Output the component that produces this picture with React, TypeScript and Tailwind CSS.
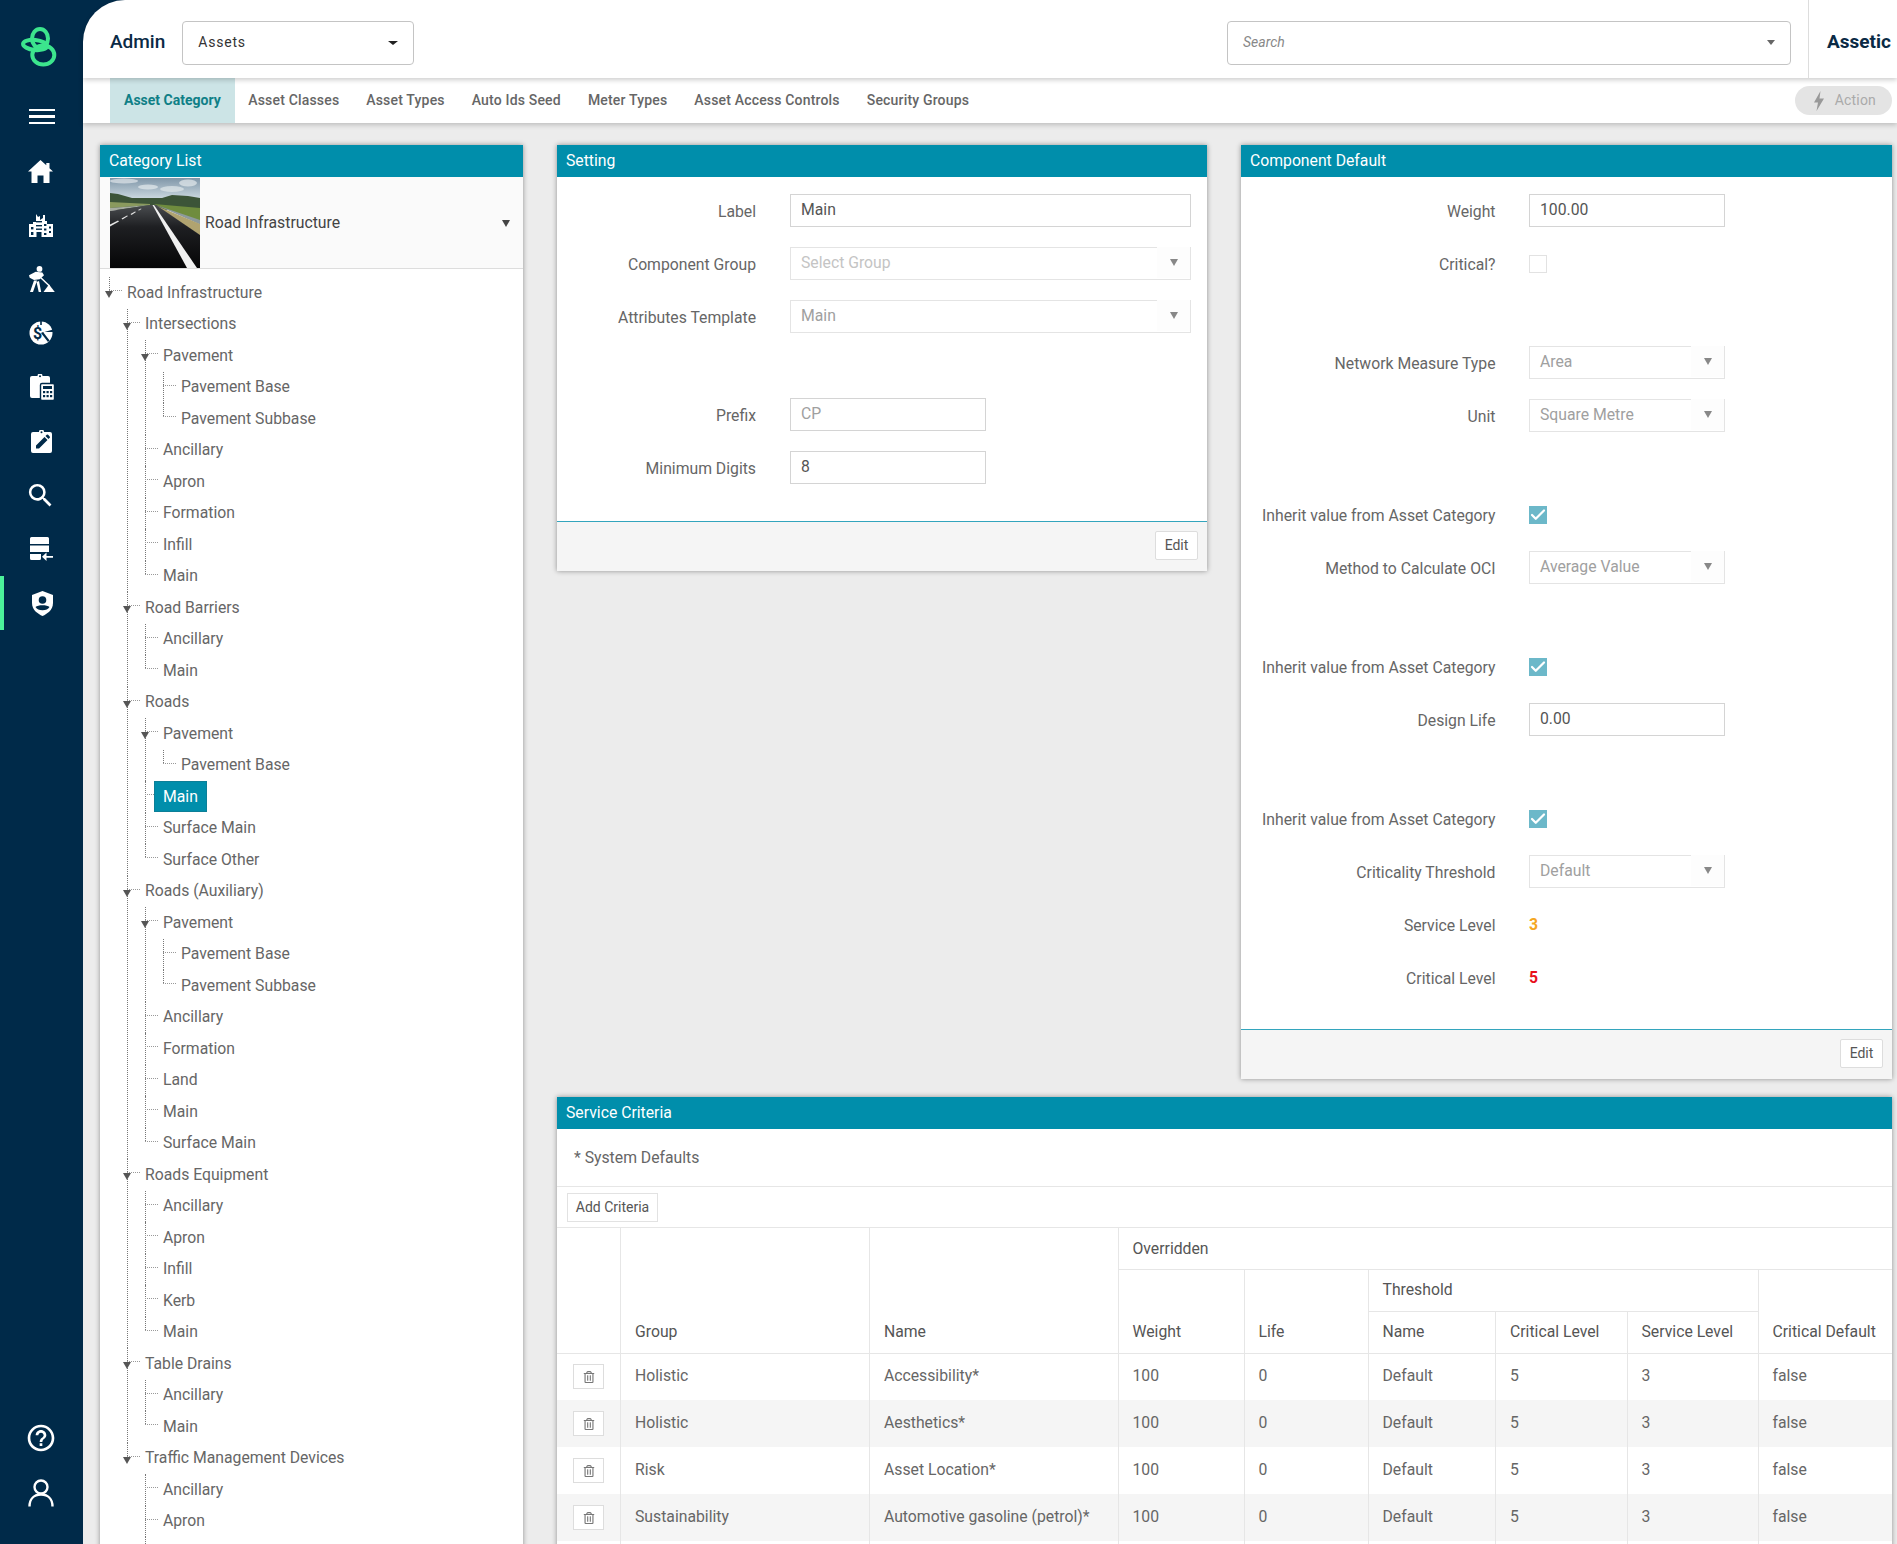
import { FaRegTrashAlt } from "react-icons/fa";
import { MdHelpOutline, MdSearch } from "react-icons/md";
import { Check } from "lucide-react";

interface TreeNode {
  label: string;
  selected?: boolean;
  children?: TreeNode[];
}

const leaf = (...names: string[]): TreeNode[] => names.map((label) => ({ label }));

const pavement = (...names: string[]): TreeNode => ({ label: "Pavement", children: leaf(...names) });

// last entry of the tree is blank: the real list runs on past the fold, only its connector shows
const tree: TreeNode[] = [
  {
    label: "Road Infrastructure",
    children: [
      {
        label: "Intersections",
        children: [pavement("Pavement Base", "Pavement Subbase"), ...leaf("Ancillary", "Apron", "Formation", "Infill", "Main")],
      },
      { label: "Road Barriers", children: leaf("Ancillary", "Main") },
      {
        label: "Roads",
        children: [pavement("Pavement Base"), { label: "Main", selected: true }, ...leaf("Surface Main", "Surface Other")],
      },
      {
        label: "Roads (Auxiliary)",
        children: [pavement("Pavement Base", "Pavement Subbase"), ...leaf("Ancillary", "Formation", "Land", "Main", "Surface Main")],
      },
      { label: "Roads Equipment", children: leaf("Ancillary", "Apron", "Infill", "Kerb", "Main") },
      { label: "Table Drains", children: leaf("Ancillary", "Main") },
      { label: "Traffic Management Devices", children: leaf("Ancillary", "Apron", "") },
    ],
  },
];

const tabs = ["Asset Classes", "Asset Types", "Auto Ids Seed", "Meter Types", "Asset Access Controls", "Security Groups"];

const criteria = [
  { group: "Holistic", name: "Accessibility*" },
  { group: "Holistic", name: "Aesthetics*" },
  { group: "Risk", name: "Asset Location*" },
  { group: "Sustainability", name: "Automotive gasoline (petrol)*" },
];

function Logo() {
  return (
    <svg width="60" height="60" viewBox="15 20 60 60" fill="none" stroke="#3ce58d" strokeWidth="4">
      <ellipse cx="43" cy="38.5" rx="8" ry="9.500" />
      <ellipse cx="38" cy="45" rx="12" ry="5" transform="rotate(6 38 45)" />
      <ellipse cx="46.300" cy="55" rx="11" ry="9.500" />
    </svg>
  );
}

function HomeIcon() {
  return (
    <svg width="25" height="23" viewBox="0 0 25 23" fill="#fff">
      <path d="M12.500 0 0 11.500h3.500V23h6v-7.500h6V23h6V11.500H25l-3.500-3.300V3h-3.200v2.200z" />
    </svg>
  );
}

function BuildingIcon() {
  return (
    <svg width="24" height="24" viewBox="0 0 24 24">
      <path fill="#fff" d="M0 11h4V9l3 0V1l2 3 2-1v4l3-2V2h2v6h2v3h6v13H0z" />
      <g fill="#002a49">
        <rect x="7" y="8" width="6" height="1.400" />
        <rect x="15" y="11" width="2.400" height="2" />
        <rect x="7" y="12" width="6" height="1.400" />
        <rect x="2" y="14" width="2.400" height="2.400" />
        <rect x="7" y="15.500" width="6" height="1.400" />
        <rect x="15" y="15.500" width="2.400" height="2" />
        <rect x="20" y="13.500" width="2" height="2" />
        <rect x="2" y="19" width="2.400" height="3" />
        <rect x="7.500" y="19" width="5" height="5" />
        <rect x="15" y="20" width="2.400" height="2" />
        <rect x="20" y="18" width="2" height="2" />
      </g>
    </svg>
  );
}

function WorkerIcon() {
  return (
    <svg width="26" height="27" viewBox="0 0 26 27" fill="#fff">
      <circle cx="10.500" cy="2.900" r="2.900" />
      <path d="M0 9.300 6.700 5.700 13.300 6.500 15 9.300 10.700 13.300 5 14 .7 11.700z" />
      <path d="M5 14.500h3L4 26H1zM7.500 16l2.500-1 2.200 11H9.700z" />
      <path d="M9.500 10.500 10.500 9.500 21 19.500 20 20.500z" />
      <path d="M14.500 26 20 18.500 25.800 26z" />
    </svg>
  );
}

function PieDollarIcon() {
  return (
    <svg width="24" height="24" viewBox="0 0 24 24">
      <circle cx="12" cy="12" r="11.500" fill="#fff" />
      <path d="M12 12 24 8.500v2.500H14zM11.200 0h1.600v4h-1.600zM12 12l7 9 1.600-1.600L14 11z" fill="#002a49" />
      <text x="8.500" y="17.500" fontSize="16" fontWeight="700" fontFamily="Roboto, sans-serif" textAnchor="middle" fill="#002a49">
        $
      </text>
    </svg>
  );
}

function ClipboardCalcIcon() {
  return (
    <svg width="25" height="27" viewBox="0 0 25 27">
      <path fill="#fff" d="M2 2h5.500a2.500 2.500 0 0 1 5 0H18a2 2 0 0 1 2 2v18a2 2 0 0 1-2 2H2a2 2 0 0 1-2-2V4a2 2 0 0 1 2-2z" />
      <circle cx="10" cy="2.200" r="1" fill="#002a49" />
      <rect x="10.500" y="9.500" width="14" height="17" rx="1.500" fill="#fff" stroke="#002a49" strokeWidth="1.400" />
      <rect x="13" y="12" width="9" height="3" fill="#002a49" />
      <g fill="#002a49">
        <rect x="13" y="17" width="2.200" height="2.200" />
        <rect x="16.500" y="17" width="2.200" height="2.200" />
        <rect x="20" y="17" width="2.200" height="2.200" />
        <rect x="13" y="21" width="2.200" height="2.200" />
        <rect x="16.500" y="21" width="2.200" height="2.200" />
        <rect x="20" y="21" width="2.200" height="2.200" />
      </g>
    </svg>
  );
}

function ClipboardEditIcon() {
  return (
    <svg width="21" height="23" viewBox="0 0 21 23">
      <path fill="#fff" d="M2 2h6a2.500 2.500 0 0 1 5 0h6a2 2 0 0 1 2 2v17a2 2 0 0 1-2 2H2a2 2 0 0 1-2-2V4a2 2 0 0 1 2-2z" />
      <circle cx="10.500" cy="2.200" r="1" fill="#002a49" />
      <path fill="#002a49" d="M5 18.500v-3L13.500 7l3 3L8 18.500zM14.500 6l1.200-1.200a1 1 0 0 1 1.400 0l1.600 1.600a1 1 0 0 1 0 1.400L17.500 9z" />
    </svg>
  );
}

function ListArrowIcon() {
  return (
    <svg width="23" height="24" viewBox="0 0 23 24" fill="#fff">
      <path d="M1.500 0h16A1.500 1.500 0 0 1 19 1.500V7H0V1.500A1.500 1.500 0 0 1 1.500 0zM0 8.500h19V15H0zM0 17h11v4.500a1.500 1.500 0 0 1-1.500 1.500h-8A1.500 1.500 0 0 1 0 21.500z" />
      <path d="M23 19v1.700H16.500V24l-4.500-4.200 4.500-4.200V19z" />
    </svg>
  );
}

function ShieldIcon() {
  return (
    <svg width="21" height="25" viewBox="0 0 21 25">
      <path fill="#fff" d="M10.500 0 21 4v8c0 7-6 11-10.500 13C6 23 0 19 0 12V4z" />
      <circle cx="10.500" cy="9" r="3.800" fill="#002a49" />
      <path fill="#002a49" d="M3.500 16c2.500-2.500 11.500-2.500 14 0-1.500 2.500-3.500 3.200-7 3.200S5 18.500 3.500 16z" />
    </svg>
  );
}

function UserIcon() {
  return (
    <svg width="26" height="28" viewBox="0 0 26 28" fill="none" stroke="#fff" strokeWidth="2.400">
      <circle cx="13" cy="8" r="6.500" />
      <path d="M1.500 27.500C1.500 19.500 6.500 15.500 13 15.500s11.500 4 11.500 12" />
    </svg>
  );
}

function RoadPicture() {
  return (
    <svg width="90" height="90" viewBox="0 0 90 90" className="shrink-0">
      <defs>
        <linearGradient id="roadSky" x1="0" y1="0" x2="0" y2="1">
          <stop offset="0" stopColor="#7f96a8" />
          <stop offset="1" stopColor="#c9d6de" />
        </linearGradient>
        <linearGradient id="roadTar" x1="0" y1="0" x2="0" y2="1">
          <stop offset="0" stopColor="#4a4d50" />
          <stop offset="0.35" stopColor="#1e1f22" />
          <stop offset="1" stopColor="#050506" />
        </linearGradient>
      </defs>
      <rect width="90" height="20" fill="url(#roadSky)" />
      <ellipse cx="14" cy="3" rx="14" ry="2.500" fill="#dfe6ea" opacity="0.7" />
      <ellipse cx="38" cy="9" rx="10" ry="2.500" fill="#e4eaed" opacity="0.7" />
      <ellipse cx="62" cy="11" rx="12" ry="3" fill="#dfe7ea" opacity="0.7" />
      <ellipse cx="78" cy="5" rx="9" ry="3.500" fill="#e4eaed" opacity="0.7" />
      <path d="M0 15 8 16 22 20 52 20 62 17 78 18 90 20V32H0z" fill="#3c5438" />
      <path d="M0 24 40 26V27L0 30z" fill="#8a9a5e" />
      <path d="M0 30 40 27 0 33z" fill="#a6aca0" />
      <path d="M44 26 90 30V44L46 27z" fill="#6f8c3e" />
      <path d="M46 27 90 42V46.500z" fill="#8d9a9c" />
      <path d="M47 28 90 46V57.500L46 28z" fill="#b0a370" />
      <path d="M40 27H46L90 57V90H0V33z" fill="url(#roadTar)" />
      <path d="M42.500 27H44L87 90H77z" fill="#f0f0f0" />
      <path d="M0 46.500 8 42.500 9 43.500 0 48.500zM11.500 40.500 17 37.500 18 38 12.500 41.500zM20.500 36 25 33.500 26 34 21.500 37zM28 32 31 30.500 31.500 31 29 32.500z" fill="#e4e4e4" />
    </svg>
  );
}

function TreeItem({ node, last }: { node: TreeNode; last: boolean }) {
  return (
    <li className="relative">
      {/* connector lines */}
      <span className={`absolute left-0 top-0 border-l border-dotted border-[#777] ${last ? "h-[13px]" : "bottom-0"}`} />
      <span className="absolute left-0 top-[13px] w-[13px] border-t border-dotted border-[#999]" />
      {node.children && (
        <span className="absolute left-[-4.5px] top-[14px] h-0 w-0 border-x-[4.5px] border-t-[7px] border-x-transparent border-t-[#555]" />
      )}
      <div className="flex h-[31.5px] items-center pl-[18px]">
        {node.selected ? (
          <span className="relative ml-[-9.5px] flex h-[31px] items-center border border-[#0c7f97] bg-[#008eab] px-[8.5px] text-white">{node.label}</span>
        ) : (
          node.label
        )}
      </div>
      {node.children && (
        <ul className="ml-[18px]">
          {node.children.map((child, i) => (
            <TreeItem key={child.label} node={child} last={i === node.children!.length - 1} />
          ))}
        </ul>
      )}
    </li>
  );
}

// pass full border classes, each caret in the picture has its own proportions
function Caret({ shape }: { shape: string }) {
  return <span className={`h-0 w-0 border-x-transparent ${shape}`} />;
}

function PanelTitle({ title }: { title: string }) {
  return <div className="flex h-[32px] items-center bg-[#008eab] pl-[9px] text-white">{title}</div>;
}

function PanelFooter() {
  return (
    <div className="flex h-[50px] items-start justify-end border-t border-[#33a5bd] bg-[#f5f5f5] pt-[9px] pr-[9px]">
      <button className="h-[29px] w-[43px] rounded-[2px] border border-[#ddd] bg-white text-[14px] text-[#555]">Edit</button>
    </div>
  );
}

function Row({ label, labelClass, children }: { label: string; labelClass: string; children: React.ReactNode }) {
  return (
    <div className="mb-[20px] flex h-[33px] items-center">
      <span className={`shrink-0 pt-[2px] text-right ${labelClass}`}>{label}</span>
      {children}
    </div>
  );
}

function TextBox({ value, width, disabled }: { value: string; width: string; disabled?: boolean }) {
  return (
    <div className={`flex h-[33px] items-center border border-[#d4d4d4] bg-white pl-[10px] pb-[2px] ${width} ${disabled ? "text-[#a0a0a0]" : "text-[#555]"}`}>
      {value}
    </div>
  );
}

function SelectBox({ value, width, faint }: { value: string; width: string; faint?: boolean }) {
  return (
    <div className={`flex h-[33px] items-center justify-between border border-[#e4e4e4] bg-white pb-[2px] pl-[10px] ${width} ${faint ? "text-[#c4c4c4]" : "text-[#a0a0a0]"}`}>
      {value}
      <span className="flex h-[31px] w-[33px] items-center justify-center bg-[#fdfdfd]">
        <Caret shape="border-x-[4.5px] border-t-[7px] border-t-[#888]" />
      </span>
    </div>
  );
}

function InheritCheck({ label }: { label: string }) {
  return (
    <Row label={label} labelClass={compLabel}>
      <span className="flex h-[18px] w-[18px] items-center justify-center bg-[#6cb8c9]">
        <Check size={18} strokeWidth={3} color="#fff" />
      </span>
    </Row>
  );
}

const setLabel = "w-[199px] mr-[34px]";
const compLabel = "w-[254.5px] mr-[33.5px]";
const th = "border-b border-l border-[#e6e6e6] px-[14px] text-left align-bottom pb-[9px] font-normal text-[#555]";
const td = "border-l border-[#e6e6e6] px-[14px] pb-[2px] text-[#666]";

export default function App() {
  return (
    <div className="flex h-[1544px] w-[1897px] overflow-hidden bg-[#002a49] font-['Roboto',sans-serif] text-[15.75px] text-[#666]">
      <aside className="relative flex w-[83px] shrink-0 flex-col items-center pt-[20px] text-white">
        <Logo />
        <div className="mt-[9px] flex h-[55px] w-full flex-col items-center justify-center gap-[4px]">
          <span className="h-[2.5px] w-[26px] bg-white" />
          <span className="h-[2.5px] w-[26px] bg-white" />
          <span className="h-[2.5px] w-[26px] bg-white" />
        </div>
        <div className="flex h-[54px] w-full items-center justify-center pr-[2px]"><HomeIcon /></div>
        <div className="flex h-[54px] w-full items-center justify-center pr-[2px]"><BuildingIcon /></div>
        <div className="flex h-[54px] w-full items-center justify-center"><WorkerIcon /></div>
        <div className="flex h-[54px] w-full items-center justify-center pr-[2px]"><PieDollarIcon /></div>
        <div className="flex h-[54px] w-full items-center justify-center pl-[2px]"><ClipboardCalcIcon /></div>
        <div className="flex h-[54px] w-full items-center justify-center"><ClipboardEditIcon /></div>
        <div className="flex h-[54px] w-full items-center justify-center pr-[2px]"><MdSearch size={31} color="#fff" /></div>
        <div className="flex h-[54px] w-full items-center justify-center"><ListArrowIcon /></div>
        <div className="relative flex h-[54px] w-full items-center justify-center pl-[1px]">
          <span className="absolute left-0 top-0 h-[54px] w-[4px] bg-[#4cf29b]" />
          <ShieldIcon />
        </div>
        <div className="mt-auto mb-[37px] flex flex-col items-center gap-[25px] pr-[2px]">
          <MdHelpOutline size={32} color="#fff" />
          <UserIcon />
        </div>
      </aside>

      <div className="flex min-w-0 flex-1 flex-col">
        <header className="relative z-20 flex h-[78px] shrink-0 items-center rounded-tl-[42px] bg-white pt-[7px] pl-[27px] shadow-[0_2px_5px_rgba(0,0,0,0.2)]">
          <span className="mr-[17px] text-[19px] font-medium text-[#0a2a45]">Admin</span>
          <div className="flex h-[44px] w-[232px] items-center justify-between rounded-[4px] border border-[#c4c4c4] px-[15px] text-[14px] tracking-[0.8px] text-[#333]">
            Assets
            <Caret shape="border-x-[5px] border-t-[4px] border-t-[#222]" />
          </div>
          <div className="ml-auto flex h-[44px] w-[564px] items-center justify-between rounded-[4px] border border-[#c4c4c4] px-[15px] text-[14px] italic text-[#888]">
            Search
            <Caret shape="border-x-[4.5px] border-t-[5px] border-t-[#666]" />
          </div>
          <div className="mt-[-7px] ml-[17px] flex h-[78px] w-[89px] items-center border-l border-[#ddd] pt-[7px] pl-[18px] text-[19px] font-bold text-[#0a2a45]">Assetic</div>
        </header>

        <nav className="relative z-10 flex h-[45px] shrink-0 bg-white pl-[27px] text-[14px] font-medium tracking-[0.18px] shadow-[0_2px_5px_rgba(0,0,0,0.2)]">
          <div className="flex items-center bg-[#cce4e6] px-[14px] font-bold tracking-normal text-[#0f7f86]">Asset Category</div>
          {tabs.map((t) => (
            <div key={t} className="flex items-center px-[13.5px] text-[#666]">{t}</div>
          ))}
          <div className="mt-[8px] mr-[5px] ml-auto flex h-[29px] items-center gap-[11px] self-start rounded-full bg-[#e4e4e4] pl-[19px] pr-[16px] font-normal text-[#aaa]">
            <svg width="10" height="20" viewBox="0 0 10 20" fill="#999">
              <path d="M6.500 0 0 11.500h4L2.500 20 10 7.500H5.500z" />
            </svg>
            Action
          </div>
        </nav>

        <main className="flex flex-1 items-start gap-[34px] bg-[#ececec] pt-[22px] pl-[17px]">
          <section className="w-[423px] shrink-0 bg-white shadow-[0_0_5px_rgba(0,0,0,0.4)]">
            <PanelTitle title="Category List" />
            <div className="flex h-[92px] items-center border-b border-[#ddd] bg-[#fafafa] pl-[10px] pr-[13px] pt-[1px]">
              <RoadPicture />
              <span className="ml-[5px] flex-1 text-[#444]">Road Infrastructure</span>
              <Caret shape="border-x-[4px] border-t-[7px] border-t-[#444]" />
            </div>
            <ul className="pt-[8px] pl-[9px]">
              {tree.map((n) => (
                <TreeItem key={n.label} node={n} last />
              ))}
            </ul>
          </section>

          <div className="flex w-[1335px] shrink-0 flex-col gap-[18px]">
            <div className="flex items-start gap-[34px]">
              <section className="w-[650px] bg-white shadow-[0_0_5px_rgba(0,0,0,0.4)]">
                <PanelTitle title="Setting" />
                <div className="pt-[17px] pb-[17px]">
                  <Row label="Label" labelClass={setLabel}>
                    <TextBox value="Main" width="w-[401px]" />
                  </Row>
                  <Row label="Component Group" labelClass={setLabel}>
                    <SelectBox value="Select Group" width="w-[401px]" faint />
                  </Row>
                  <Row label="Attributes Template" labelClass={setLabel}>
                    <SelectBox value="Main" width="w-[401px]" />
                  </Row>
                  <div className="h-[45px]" />
                  <Row label="Prefix" labelClass={setLabel}>
                    <TextBox value="CP" width="w-[196px]" disabled />
                  </Row>
                  <Row label="Minimum Digits" labelClass={setLabel}>
                    <TextBox value="8" width="w-[196px]" />
                  </Row>
                </div>
                <PanelFooter />
              </section>

              <section className="w-[651px] bg-white shadow-[0_0_5px_rgba(0,0,0,0.4)]">
                <PanelTitle title="Component Default" />
                <div className="pt-[17px] pb-[15px]">
                  <Row label="Weight" labelClass={compLabel}>
                    <TextBox value="100.00" width="w-[196px]" />
                  </Row>
                  <Row label="Critical?" labelClass={compLabel}>
                    <span className="h-[18px] w-[18px] border border-[#e2e2e2] bg-white" />
                  </Row>
                  <div className="h-[46px]" />
                  <Row label="Network Measure Type" labelClass={compLabel}>
                    <SelectBox value="Area" width="w-[196px]" />
                  </Row>
                  <Row label="Unit" labelClass={compLabel}>
                    <SelectBox value="Square Metre" width="w-[196px]" />
                  </Row>
                  <div className="h-[46px]" />
                  <InheritCheck label="Inherit value from Asset Category" />
                  <Row label="Method to Calculate OCI" labelClass={compLabel}>
                    <SelectBox value="Average Value" width="w-[196px]" />
                  </Row>
                  <div className="h-[46px]" />
                  <InheritCheck label="Inherit value from Asset Category" />
                  <Row label="Design Life" labelClass={compLabel}>
                    <TextBox value="0.00" width="w-[196px]" />
                  </Row>
                  <div className="h-[46px]" />
                  <InheritCheck label="Inherit value from Asset Category" />
                  <Row label="Criticality Threshold" labelClass={compLabel}>
                    <SelectBox value="Default" width="w-[196px]" />
                  </Row>
                  <Row label="Service Level" labelClass={compLabel}>
                    <span className="pt-[1px] font-bold text-[#f5a623]">3</span>
                  </Row>
                  <Row label="Critical Level" labelClass={compLabel}>
                    <span className="pt-[1px] font-bold text-[#e8101c]">5</span>
                  </Row>
                </div>
                <PanelFooter />
              </section>
            </div>

            <section className="bg-white shadow-[0_0_5px_rgba(0,0,0,0.4)]">
              <PanelTitle title="Service Criteria" />
              <div className="flex h-[58px] items-center border-b border-[#e6e6e6] pl-[17px]">* System Defaults</div>
              <div className="h-[41px] border-b border-[#e6e6e6] pt-[6px] pl-[10px]">
                <button className="h-[29px] w-[91px] border border-[#e2e2e2] bg-white text-[14px] text-[#555]">Add Criteria</button>
              </div>
              <table className="w-full table-fixed border-collapse">
                <colgroup>
                  <col className="w-[63.5px]" />
                  <col className="w-[249px]" />
                  <col className="w-[248.5px]" />
                  <col className="w-[126px]" />
                  <col className="w-[124px]" />
                  <col className="w-[127.5px]" />
                  <col className="w-[131.5px]" />
                  <col className="w-[131px]" />
                  <col className="w-[134px]" />
                </colgroup>
                <thead>
                  <tr className="h-[41px]">
                    <th rowSpan={3} className="border-b border-[#e6e6e6]" />
                    <th rowSpan={3} className={th}>Group</th>
                    <th rowSpan={3} className={th}>Name</th>
                    <th colSpan={6} className="border-b border-l border-[#e6e6e6] px-[14px] pt-[2px] text-left font-normal text-[#555]">Overridden</th>
                  </tr>
                  <tr className="h-[42px]">
                    <th rowSpan={2} className={th}>Weight</th>
                    <th rowSpan={2} className={th}>Life</th>
                    <th colSpan={3} className="border-b border-l border-[#e6e6e6] px-[14px] text-left font-normal text-[#555]">Threshold</th>
                    <th rowSpan={2} className={th}>Critical Default</th>
                  </tr>
                  <tr className="h-[42px]">
                    <th className={th}>Name</th>
                    <th className={th}>Critical Level</th>
                    <th className={th}>Service Level</th>
                  </tr>
                </thead>
                <tbody>
                  {criteria.map((c, i) => (
                    <tr key={c.name} className={`h-[47px] ${i % 2 === 1 ? "bg-[#f5f5f5]" : "bg-white"}`}>
                      <td className="text-center">
                        <button className="inline-flex h-[25px] w-[31px] items-center justify-center border border-[#ddd] bg-white align-middle">
                          <FaRegTrashAlt size={12} color="#777" />
                        </button>
                      </td>
                      <td className={td}>{c.group}</td>
                      <td className={td}>{c.name}</td>
                      <td className={td}>100</td>
                      <td className={td}>0</td>
                      <td className={td}>Default</td>
                      <td className={td}>5</td>
                      <td className={td}>3</td>
                      <td className={td}>false</td>
                    </tr>
                  ))}
                  <tr className="h-[47px]">
                    <td />
                    <td className={td} />
                    <td className={td} />
                    <td className={td} />
                    <td className={td} />
                    <td className={td} />
                    <td className={td} />
                    <td className={td} />
                    <td className={td} />
                  </tr>
                </tbody>
              </table>
            </section>
          </div>
        </main>
      </div>
    </div>
  );
}
